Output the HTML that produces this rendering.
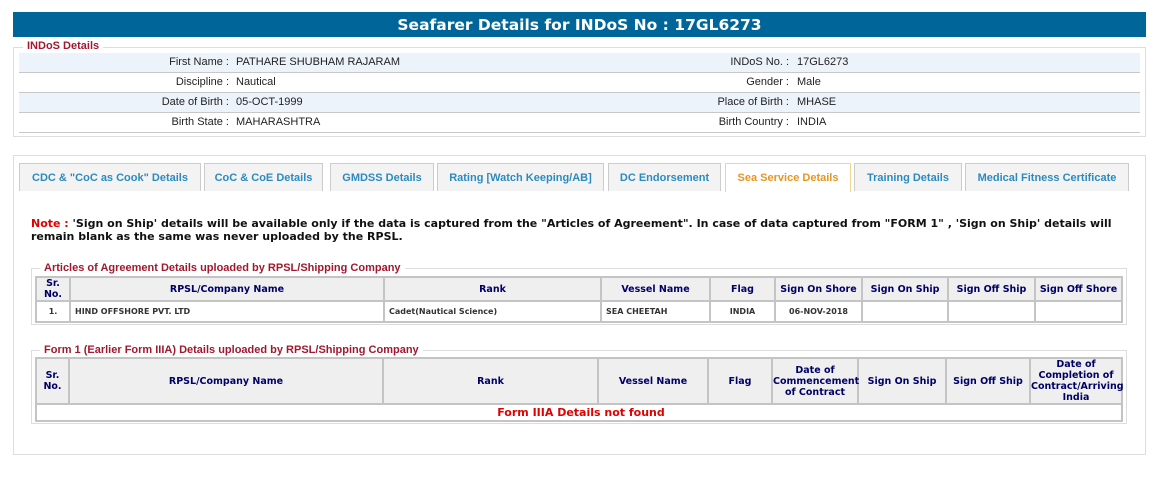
<!DOCTYPE html>
<html><head><meta charset="utf-8"><style>
*{box-sizing:border-box;margin:0;padding:0}
body{width:1164px;height:480px;background:#fff;position:relative;font-family:"Liberation Sans",Arial,sans-serif;overflow:hidden}
.abs{position:absolute}
.hdr{left:13px;top:12px;width:1133px;height:25px;background:#00669a;color:#fff;font:bold 15.5px "DejaVu Sans",Verdana,sans-serif;text-align:center;line-height:26px}
.fs{border:1px solid #ddd}
.leg{background:#fff;color:#a0192e;font-size:11px;font-weight:bold;padding:0 4px;line-height:12px}
.row{left:19px;width:1121px;height:20px;border-bottom:1px solid #c8c8c8;font-size:11px;color:#222;line-height:19px}
.row.a{background:#edf3fb}
.row span{position:absolute}
.l1{right:911px;text-align:right}.v1{left:217px}
.l2{right:351px;text-align:right}.v2{left:778px}
.tab{top:163px;height:28px;border:1px solid #ccc;border-bottom:none;background:#f3f3f3;color:#2b8bbf;font-size:11px;font-weight:bold;text-align:center;line-height:29px}
.tab.on{background:#fff;border-color:#f0d68c;color:#e8951e;height:29px}
.note{left:31px;top:217px;width:1100px;font:bold 11px/13px "DejaVu Sans",Verdana,sans-serif;color:#111}
table{position:absolute;border-collapse:collapse;table-layout:fixed;font-family:"DejaVu Sans",Verdana,sans-serif}
th{background:#efefef;color:#000066;font-size:9.5px;font-weight:bold;border:2px solid #c4c4c4;line-height:11px}
td{border:2px solid #c4c4c4;font-size:8px;font-weight:bold;color:#333;height:21px;padding-left:4px}
</style></head><body>
<div class="abs hdr">Seafarer Details for INDoS No : 17GL6273</div>
<div class="abs fs" style="left:13px;top:47px;width:1133px;height:90px"></div>
<div class="abs leg" style="left:23px;top:40px">INDoS Details</div>
<div class="abs row a" style="top:53px"><span class="l1">First Name :</span><span class="v1">PATHARE SHUBHAM RAJARAM</span><span class="l2">INDoS No. :</span><span class="v2">17GL6273</span></div>
<div class="abs row" style="top:73px"><span class="l1">Discipline :</span><span class="v1">Nautical</span><span class="l2">Gender :</span><span class="v2">Male</span></div>
<div class="abs row a" style="top:93px"><span class="l1">Date of Birth :</span><span class="v1">05-OCT-1999</span><span class="l2">Place of Birth :</span><span class="v2">MHASE</span></div>
<div class="abs row" style="top:113px"><span class="l1">Birth State :</span><span class="v1">MAHARASHTRA</span><span class="l2">Birth Country :</span><span class="v2">INDIA</span></div>

<div class="abs fs" style="left:13px;top:155px;width:1133px;height:300px"></div>
<div class="abs tab" style="left:19px;width:182px">CDC &amp; "CoC as Cook" Details</div>
<div class="abs tab" style="left:204px;width:119px">CoC &amp; CoE Details</div>
<div class="abs tab" style="left:330px;width:104px">GMDSS Details</div>
<div class="abs tab" style="left:437px;width:167px">Rating [Watch Keeping/AB]</div>
<div class="abs tab" style="left:608px;width:113px">DC Endorsement</div>
<div class="abs tab on" style="left:725px;width:126px">Sea Service Details</div>
<div class="abs tab" style="left:854px;width:108px">Training Details</div>
<div class="abs tab" style="left:965px;width:164px">Medical Fitness Certificate</div>

<div class="abs note"><span style="color:#e00000">Note :</span> 'Sign on Ship' details will be available only if the data is captured from the "Articles of Agreement". In case of data captured from "FORM 1" , 'Sign on Ship' details will remain blank as the same was never uploaded by the RPSL.</div>

<div class="abs fs" style="left:31px;top:268px;width:1096px;height:57px"></div>
<div class="abs leg" style="left:40px;top:262px">Articles of Agreement Details uploaded by RPSL/Shipping Company</div>
<table style="left:35px;top:276px;width:1086px">
<colgroup><col style="width:34px"><col style="width:314px"><col style="width:217px"><col style="width:109px"><col style="width:65px"><col style="width:87px"><col style="width:86px"><col style="width:87px"><col style="width:87px"></colgroup>
<tr style="height:24px"><th>Sr.<br>No.</th><th>RPSL/Company Name</th><th>Rank</th><th>Vessel Name</th><th>Flag</th><th>Sign On Shore</th><th>Sign On Ship</th><th>Sign Off Ship</th><th>Sign Off Shore</th></tr>
<tr><td style="text-align:center;padding:0">1.</td><td>HIND OFFSHORE PVT. LTD</td><td>Cadet(Nautical Science)</td><td>SEA CHEETAH</td><td style="text-align:center;padding:0">INDIA</td><td style="text-align:center;padding:0">06-NOV-2018</td><td></td><td></td><td></td></tr>
</table>

<div class="abs fs" style="left:31px;top:350px;width:1096px;height:74px"></div>
<div class="abs leg" style="left:40px;top:344px">Form 1 (Earlier Form IIIA) Details uploaded by RPSL/Shipping Company</div>
<table style="left:35px;top:357px;width:1086px">
<colgroup><col style="width:33px"><col style="width:314px"><col style="width:215px"><col style="width:110px"><col style="width:64px"><col style="width:86px"><col style="width:88px"><col style="width:84px"><col style="width:92px"></colgroup>
<tr style="height:46px"><th>Sr.<br>No.</th><th>RPSL/Company Name</th><th>Rank</th><th>Vessel Name</th><th>Flag</th><th>Date of Commencement of Contract</th><th>Sign On Ship</th><th>Sign Off Ship</th><th>Date of Completion of Contract/Arriving India</th></tr>
<tr><td colspan="9" style="text-align:center;color:#e00000;font-size:11px;height:17px;line-height:13px">Form IIIA Details not found</td></tr>
</table>
</body></html>
